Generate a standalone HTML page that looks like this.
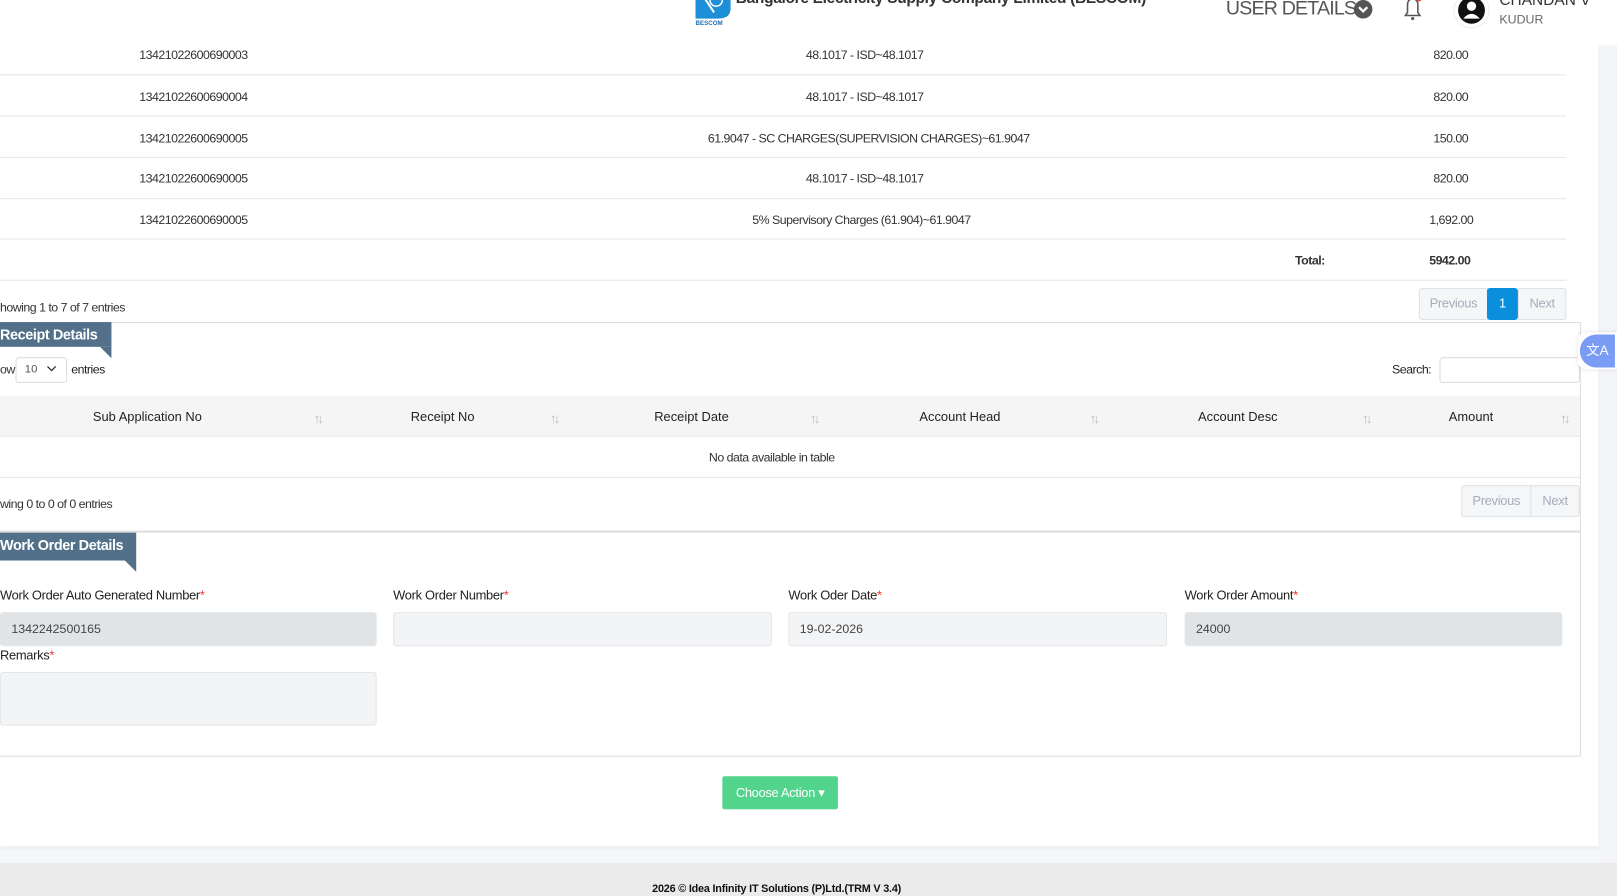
<!DOCTYPE html>
<html><head><meta charset="utf-8"><style>
*{box-sizing:border-box;margin:0;padding:0}
html,body{width:1617px;height:896px;overflow:hidden;background:#f5f6f8;font-family:"Liberation Sans",sans-serif;color:#333}
#w{position:absolute;left:0;top:0;width:1567px;height:868px;transform:scale(1.03191,1.03226);transform-origin:0 0}
.a{position:absolute;white-space:nowrap}
.t{font-size:12px;color:#333;letter-spacing:-0.5px}
.line{position:absolute;height:1px;background:#e6e6e6}
.rib{position:absolute;left:0;background:#527089;color:#fff;font-weight:bold;font-size:14px;letter-spacing:-0.4px;line-height:24px}
.fold{position:absolute;width:0;height:0;border-top:11px solid #527089;border-left:11px solid transparent}
.pg{position:absolute;border:1px solid #dee2e6;background:#f5f6f8;color:#aab;font-size:12.5px;text-align:center;letter-spacing:-0.3px}
.lbl{position:absolute;font-size:12.5px;color:#222;letter-spacing:-0.3px}
.lbl b{color:#e33;font-weight:normal}
.inp{position:absolute;border:1px solid #e3e5e8;border-radius:3px;font-size:12px;color:#444;padding-left:10px;line-height:31px}
.th{position:absolute;top:397px;font-size:12.5px;color:#222}
.ar{position:absolute;top:398px;font-size:13px;color:#bbb;letter-spacing:-3px}
</style></head><body><div id="w">
<div class="a" style="left:0;top:0;width:1567px;height:44px;background:#fff;box-shadow:0 2px 4px rgba(0,0,0,.06)"></div>
<svg class="a" style="left:672px;top:-8px" width="38" height="34"><path d="M2 0 L36 0 L36 16 Q36 26 24 26 L2 26 Z" fill="#1d8ed8"/><path d="M8 2 L20 20" stroke="#fff" stroke-width="2"/><circle cx="22" cy="8" r="6" fill="none" stroke="#fff" stroke-width="1.5"/><text x="2" y="32" font-size="6" font-weight="bold" fill="#1d6fb8" font-family="Liberation Sans">BESCOM</text></svg>
<div class="a" style="left:713px;top:-10px;font-size:15px;font-weight:bold;color:#333;letter-spacing:-0.3px">Bangalore Electricity Supply Company Limited (BESCOM)</div>
<div class="a" style="left:1188px;top:-2px;font-size:19px;color:#555;letter-spacing:-0.8px">USER DETAILS</div>
<svg class="a" style="left:1312px;top:0" width="18" height="18"><circle cx="9" cy="9" r="9" fill="#555"/><path d="M5 7 L9 11 L13 7" stroke="#fff" stroke-width="2.2" fill="none"/></svg>
<svg class="a" style="left:1358px;top:-4px" width="22" height="26"><path d="M4 19 L6 16 L6 9 Q6 3 11 3 Q16 3 16 9 L16 16 L18 19 Z" fill="none" stroke="#555" stroke-width="1.5"/><circle cx="11" cy="22" r="1.5" fill="#555"/><circle cx="17" cy="3" r="2.5" fill="#e44"/></svg>
<svg class="a" style="left:1408px;top:-8px" width="36" height="36"><circle cx="18" cy="18" r="17" fill="#fff" stroke="#eee"/><circle cx="18" cy="18" r="13" fill="#111"/><circle cx="18" cy="14" r="4.5" fill="#fff"/><path d="M10 26 Q18 17 26 26" fill="#fff"/></svg>
<div class="a" style="left:1453px;top:-8px;font-size:15px;color:#333">CHANDAN V</div>
<div class="a" style="left:1453px;top:12px;font-size:12px;color:#666">KUDUR</div>
<div class="a" style="left:1549px;top:44px;width:18px;height:792px;background:#f4f5f8"></div>
<div class="a" style="left:0;top:44px;width:1549px;height:776px;background:#fff;box-shadow:0 2px 3px rgba(0,0,0,.05)"></div>
<div class="a t" style="left:135px;top:46px">13421022600690003</div><div class="a t" style="left:781px;top:46px">48.1017 - ISD~48.1017</div><div class="a t" style="left:1389px;top:46px">820.00</div>
<div class="line" style="left:0;top:72px;width:1518px"></div>
<div class="a t" style="left:135px;top:87px">13421022600690004</div><div class="a t" style="left:781px;top:87px">48.1017 - ISD~48.1017</div><div class="a t" style="left:1389px;top:87px">820.00</div>
<div class="line" style="left:0;top:112px;width:1518px"></div>
<div class="a t" style="left:135px;top:127px">13421022600690005</div><div class="a t" style="left:686px;top:127px">61.9047 - SC CHARGES(SUPERVISION CHARGES)~61.9047</div><div class="a t" style="left:1389px;top:127px">150.00</div>
<div class="line" style="left:0;top:152px;width:1518px"></div>
<div class="a t" style="left:135px;top:166px">13421022600690005</div><div class="a t" style="left:781px;top:166px">48.1017 - ISD~48.1017</div><div class="a t" style="left:1389px;top:166px">820.00</div>
<div class="line" style="left:0;top:192px;width:1518px"></div>
<div class="a t" style="left:135px;top:206px">13421022600690005</div><div class="a t" style="left:729px;top:206px">5% Supervisory Charges (61.904)~61.9047</div><div class="a t" style="left:1385px;top:206px">1,692.00</div>
<div class="line" style="left:0;top:231px;width:1518px"></div>
<div class="a t" style="left:1255px;top:245px;font-weight:bold">Total:</div><div class="a t" style="left:1385px;top:245px;font-weight:bold">5942.00</div>
<div class="line" style="left:0;top:271px;width:1518px"></div>
<div class="a t" style="left:0;top:291px">howing 1 to 7 of 7 entries</div>
<div class="pg" style="left:1375px;top:279px;width:67px;height:31px;line-height:29px;border-radius:3px 0 0 3px">Previous</div>
<div class="pg" style="left:1441px;top:279px;width:30px;height:31px;line-height:29px;background:#0a8fdc;border-color:#0a8fdc;color:#fff;border-radius:3px">1</div>
<div class="pg" style="left:1471px;top:279px;width:47px;height:31px;line-height:29px;border-radius:0 3px 3px 0">Next</div>
<div class="a" style="left:0;top:312px;width:1532px;height:421px;border:1px solid #ddd;border-left:none"></div>
<div class="rib" style="top:312px;width:108px;height:24px">Receipt Details</div><div class="fold" style="left:97px;top:336px"></div>
<div class="a t" style="left:0;top:351px">ow</div>
<div class="a" style="left:15px;top:346px;width:50px;height:25px;border:1px solid #ddd;border-radius:3px;font-size:11px;color:#555;padding:5px 0 0 8px">10 <svg width="10" height="8" style="margin-left:6px"><path d="M1 2 L5 6 L9 2" stroke="#333" fill="none" stroke-width="1.3"/></svg></div>
<div class="a t" style="left:69px;top:351px;color:#222">entries</div>
<div class="a t" style="left:1349px;top:351px;color:#222">Search:</div>
<div class="a" style="left:1395px;top:346px;width:136px;height:25px;border:1px solid #ddd;border-radius:3px"></div>
<div class="a" style="left:0;top:384px;width:1531px;height:38px;background:#f5f5f5"></div>
<div class="th" style="left:90px">Sub Application No</div><div class="ar" style="left:304px">↑↓</div>
<div class="th" style="left:398px">Receipt No</div><div class="ar" style="left:533px">↑↓</div>
<div class="th" style="left:634px">Receipt Date</div><div class="ar" style="left:785px">↑↓</div>
<div class="th" style="left:891px">Account Head</div><div class="ar" style="left:1056px">↑↓</div>
<div class="th" style="left:1161px">Account Desc</div><div class="ar" style="left:1320px">↑↓</div>
<div class="th" style="left:1404px">Amount</div><div class="ar" style="left:1512px">↑↓</div>
<div class="line" style="left:0;top:422px;width:1531px"></div>
<div class="a t" style="left:687px;top:436px">No data available in table</div>
<div class="line" style="left:0;top:462px;width:1531px"></div>
<div class="a t" style="left:0;top:481px">wing 0 to 0 of 0 entries</div>
<div class="pg" style="left:1416px;top:470px;width:68px;height:31px;line-height:29px;border-radius:3px 0 0 3px">Previous</div>
<div class="pg" style="left:1483px;top:470px;width:48px;height:31px;line-height:29px;border-radius:0 3px 3px 0">Next</div>
<div class="a" style="left:0;top:514px;width:1531px;height:2px;background:#ddd"></div>
<div class="rib" style="top:516px;width:132px;height:27px;line-height:25px">Work Order Details</div><div class="fold" style="left:121px;top:543px"></div>
<div class="lbl" style="left:0;top:570px">Work Order Auto Generated Number<b>*</b></div>
<div class="lbl" style="left:381px;top:570px">Work Order Number<b>*</b></div>
<div class="lbl" style="left:764px;top:570px">Work Oder Date<b>*</b></div>
<div class="lbl" style="left:1148px;top:570px">Work Order Amount<b>*</b></div>
<div class="inp" style="left:0;top:593px;width:365px;height:33px;background:#e1e4e7">1342242500165</div>
<div class="inp" style="left:381px;top:593px;width:367px;height:33px;background:#f3f4f6"></div>
<div class="inp" style="left:764px;top:593px;width:367px;height:33px;background:#f3f4f6">19-02-2026</div>
<div class="inp" style="left:1148px;top:593px;width:366px;height:33px;background:#e1e4e7">24000</div>
<div class="lbl" style="left:0;top:628px">Remarks<b>*</b></div>
<div class="inp" style="left:0;top:651px;width:365px;height:52px;background:#f3f4f6"></div>
<div class="a" style="left:700px;top:752px;width:112px;height:32px;background:#52d48d;border-radius:2px;color:#fff;font-size:12.5px;line-height:32px;text-align:center;letter-spacing:-0.3px">Choose Action ▾</div>
<div class="a" style="left:0;top:836px;width:1567px;height:32px;background:#ebebeb"></div>
<div class="a" style="left:632px;top:855px;font-size:10.5px;font-weight:bold;color:#111;letter-spacing:-0.2px">2026 © Idea Infinity IT Solutions (P)Ltd.(TRM V 3.4)</div>
<div class="a" style="left:1529px;top:322px;width:38px;height:36px;background:#fff;border-radius:8px 0 0 8px;box-shadow:0 0 4px rgba(0,0,0,.1)"></div>
<div class="a" style="left:1531px;top:324px;width:34px;height:32px;background:#7b9cf5;border-radius:16px 0 0 16px;color:#fff;font-size:13px;line-height:32px;text-align:center">文A</div>
</div></body></html>
